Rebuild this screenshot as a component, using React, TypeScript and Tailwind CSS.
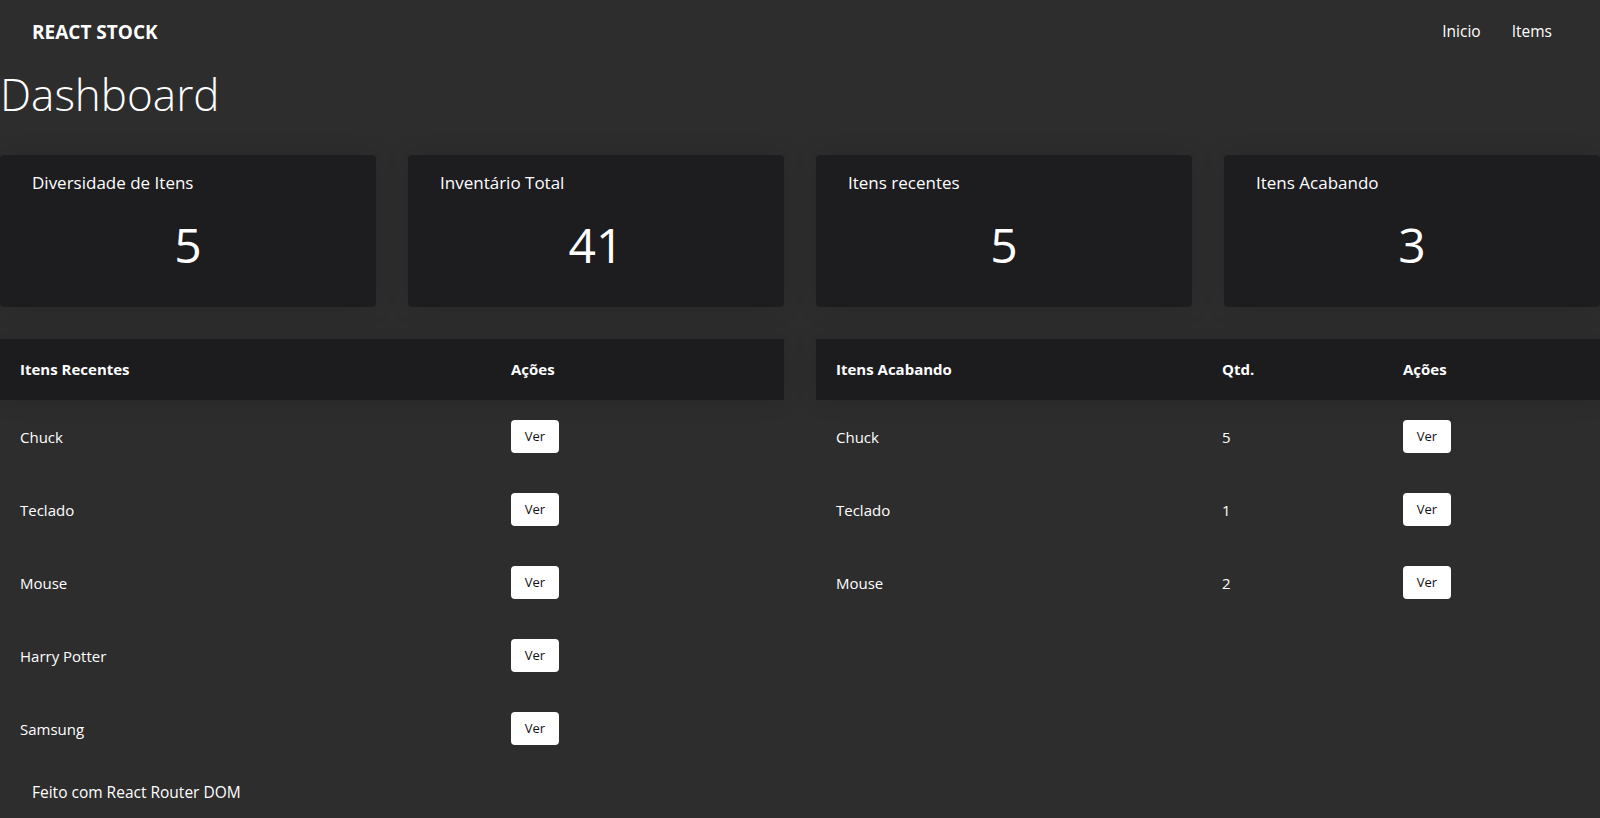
import React from 'react';

const cards = [
    { title: 'Diversidade de Itens', value: 5 },
    { title: 'Inventário Total', value: 41 },
    { title: 'Itens recentes', value: 5 },
    { title: 'Itens Acabando', value: 3 },
];

const recentes = ['Chuck', 'Teclado', 'Mouse', 'Harry Potter', 'Samsung'];

const acabando = [
    { name: 'Chuck', qtd: 5 },
    { name: 'Teclado', qtd: 1 },
    { name: 'Mouse', qtd: 2 },
];

function VerButton() {
    return (
        <button className="w-12 h-[33px] bg-white text-[#111] text-[13px] rounded-[4px]">
            Ver
        </button>
    );
}

export default function App() {
    return (
        <div
            className="min-h-[818px] bg-[#2d2d2d] text-white"
            style={{ fontFamily: '"Open Sans", "Noto Sans", sans-serif' }}
        >
            {/* Top bar */}
            <header className="h-[60px] pt-1 flex items-center justify-between pl-8 pr-12">
                <span className="text-[19px] font-bold">REACT STOCK</span>
                <nav className="flex gap-[31px] text-[15.5px]">
                    <a>Inicio</a>
                    <a>Items</a>
                </nav>
            </header>

            <h1 className="mt-3 mb-[39px] text-[44px] leading-none font-light">Dashboard</h1>

            {/* Summary cards */}
            <div className="grid grid-cols-4 gap-8">
                {cards.map((card) => (
                    <div
                        key={card.title}
                        className="h-[152px] bg-[#1d1c1f] rounded-[4px] px-8 pt-[15px] shadow-[0_0_24px_rgba(0,0,0,0.12)]"
                    >
                        <h2 className="text-[17px] leading-[1.5]">{card.title}</h2>
                        <p className="mt-[25px] text-[48px] leading-none text-center">{card.value}</p>
                    </div>
                ))}
            </div>

            {/* Tables */}
            <div className="grid grid-cols-2 gap-8 mt-8">
                <table className="w-full table-fixed text-[15px] text-left">
                    <thead className="bg-[#1c1b1e] shadow-[0_0_24px_rgba(0,0,0,0.12)]">
                        <tr className="h-[61px]">
                            <th className="w-[491px] px-5 text-[15px] font-bold">Itens Recentes</th>
                            <th className="px-5 text-[15px] font-bold">Ações</th>
                        </tr>
                    </thead>
                    <tbody>
                        {recentes.map((name) => (
                            <tr key={name} className="h-[73px]">
                                <td className="px-5 pt-[2px]">{name}</td>
                                <td className="px-5"><VerButton /></td>
                            </tr>
                        ))}
                    </tbody>
                </table>

                <table className="w-full table-fixed text-[15px] text-left self-start">
                    <thead className="bg-[#1c1b1e] shadow-[0_0_24px_rgba(0,0,0,0.12)]">
                        <tr className="h-[61px]">
                            <th className="w-[386px] px-5 text-[15px] font-bold">Itens Acabando</th>
                            <th className="w-[181px] px-5 text-[15px] font-bold">Qtd.</th>
                            <th className="px-5 text-[15px] font-bold">Ações</th>
                        </tr>
                    </thead>
                    <tbody>
                        {acabando.map((item) => (
                            <tr key={item.name} className="h-[73px]">
                                <td className="px-5 pt-[2px]">{item.name}</td>
                                <td className="px-5 pt-[2px]">{item.qtd}</td>
                                <td className="px-5"><VerButton /></td>
                            </tr>
                        ))}
                    </tbody>
                </table>
            </div>

            <footer className="px-8 mt-4 text-[15.5px] leading-[1.5]">Feito com React Router DOM</footer>
        </div>
    );
}
